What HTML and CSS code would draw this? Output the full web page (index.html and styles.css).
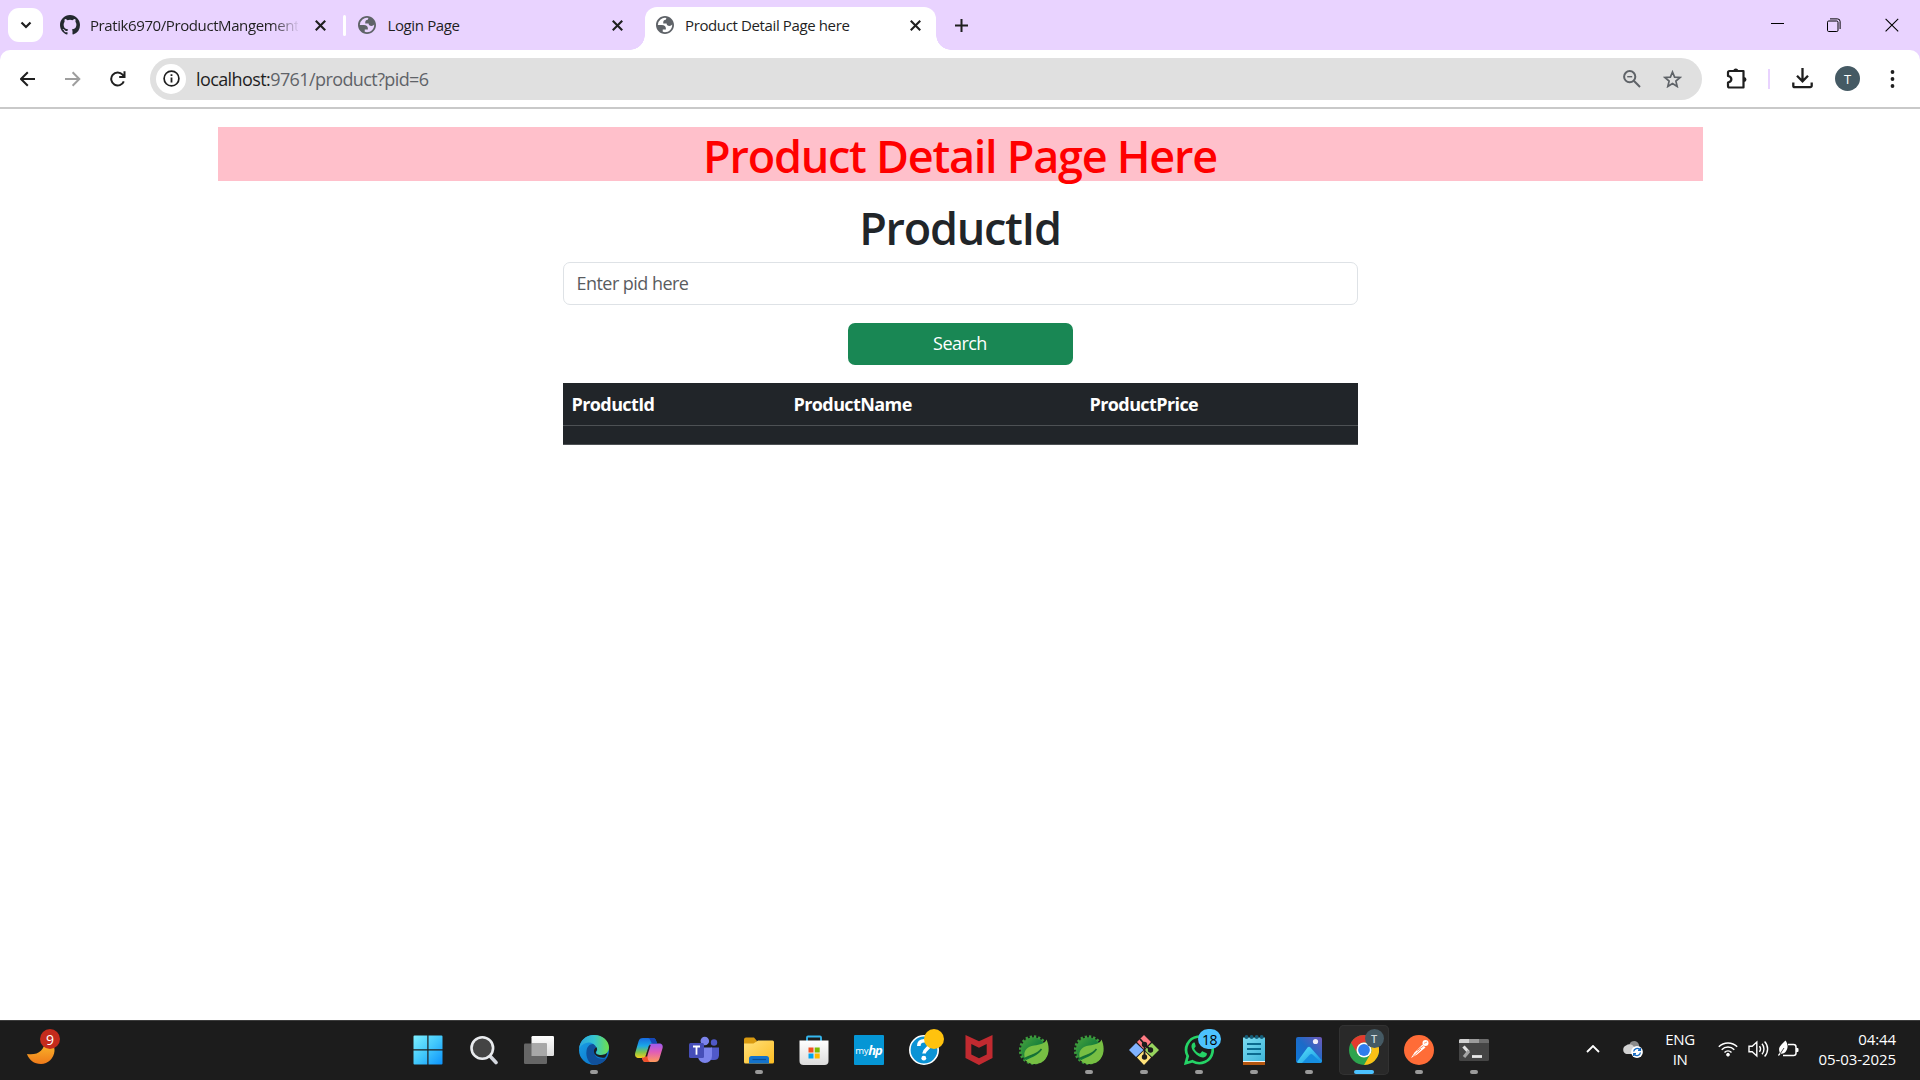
FILE: index.html
```html
<!DOCTYPE html>
<html lang="en">
<head>
<meta charset="utf-8">
<title>Product Detail Page here</title>
<link rel="stylesheet" href="styles.css">
</head>
<body>
<svg class="defs" width="0" height="0" aria-hidden="true">
  <defs>
    <linearGradient id="moon" x1="0" y1="0" x2="0" y2="1"><stop offset="0" stop-color="#fbc02d"/><stop offset="1" stop-color="#ef7a1a"/></linearGradient>
    <linearGradient id="win" gradientUnits="userSpaceOnUse" x1="0" y1="0" x2="30" y2="30"><stop offset="0" stop-color="#7ff0ff"/><stop offset=".5" stop-color="#42c8fb"/><stop offset="1" stop-color="#0a90fb"/></linearGradient>
    <linearGradient id="light" x1="0" y1="0" x2="0" y2="1"><stop offset="0" stop-color="#fff"/><stop offset="1" stop-color="#dcdcdc"/></linearGradient>
    <linearGradient id="edgeTop" x1="0" y1="0" x2="1" y2="0"><stop offset="0" stop-color="#2aa5e0"/><stop offset=".5" stop-color="#35c5d0"/><stop offset="1" stop-color="#6fe04a"/></linearGradient>
    <linearGradient id="edgeLow" x1="0" y1="0" x2="1" y2="1"><stop offset="0" stop-color="#1ca5e8"/><stop offset="1" stop-color="#0667c4"/></linearGradient>
    <linearGradient id="copA" x1="0" y1="0" x2="0" y2="1"><stop offset="0" stop-color="#1769e0"/><stop offset=".4" stop-color="#1aa8e8"/><stop offset=".7" stop-color="#7cc44d"/><stop offset="1" stop-color="#f5cf1c"/></linearGradient>
    <linearGradient id="copB" x1="0" y1="0" x2="0" y2="1"><stop offset="0" stop-color="#9b5cf0"/><stop offset=".45" stop-color="#e05cb8"/><stop offset="1" stop-color="#ff9a5c"/></linearGradient>
    <linearGradient id="folder" x1="0" y1="0" x2="1" y2="1"><stop offset="0" stop-color="#ffe07a"/><stop offset="1" stop-color="#fdbd22"/></linearGradient>
    <linearGradient id="photo" x1="0" y1="1" x2="1" y2="0"><stop offset="0" stop-color="#0d78d8"/><stop offset=".5" stop-color="#1c6bc8"/><stop offset="1" stop-color="#7058b8"/></linearGradient>
    <linearGradient id="hill" x1="0" y1="0" x2="1" y2="1"><stop offset="0" stop-color="#5ce8fa"/><stop offset="1" stop-color="#1590e4"/></linearGradient>
    <linearGradient id="note" x1="0" y1="0" x2="1" y2="1"><stop offset="0" stop-color="#7bdcf2"/><stop offset="1" stop-color="#3fb5d8"/></linearGradient>
    <linearGradient id="gear" x1="0" y1="0" x2="1" y2="1"><stop offset="0" stop-color="#4aa53c"/><stop offset=".6" stop-color="#0f7a3c"/><stop offset="1" stop-color="#3a9a3e"/></linearGradient>
    <symbol id="globe" viewBox="2 2 20 20"><path fill="#5f6368" fill-rule="evenodd" d="M12 2C6.48 2 2 6.48 2 12s4.480 10 10 10 10-4.480 10-10S17.520 2 12 2zM4 12h4.400c3.407.022 4.922 1.730 4.543 5.127H9.488v2.470a8.004 8.004 0 0 0 10.498-8.083C19.327 12.504 18.331 13 17 13c-2.137 0-3.206-.916-3.206-2.750h-3.748c-.274-2.728.683-4.092 2.870-4.092 0-.975.327-1.597.811-1.970A8.004 8.004 0 0 0 4 12z"/></symbol>
    <symbol id="x" viewBox="0 0 10 10"><path d="M.7.7l8.600 8.600M9.300.7L.7 9.300" stroke="#1f1f1f" stroke-width="1.900" fill="none"/></symbol>
    <symbol id="spring" viewBox="0 0 30 30">
      <circle cx="14.500" cy="15" r="12.700" fill="url(#gear)"/>
      <circle cx="14.500" cy="15" r="13.300" fill="none" stroke="#3c9a3c" stroke-width="2.800" stroke-dasharray="2.300 1.880"/>
      <path d="M27.500 4.500C26 9 21 9.500 15 10.500 6 12 4 18 6 23.500 10 20 18 20 22 14.500 19 21.500 11 22.500 6.500 25.500 12 31 22 30 26.500 24 31 18 30 10 27.500 4.500z" fill="#77bf43"/>
      <path d="M4.500 24.500C9 20 18 21 22.500 14" fill="none" stroke="#176f35" stroke-width="1.500"/>
    </symbol>
  </defs>
</svg>

<header class="tabstrip">
  <div class="tab-search"><svg width="12" height="8" viewBox="0 0 12 8"><path d="M1.500 1.500L6 6l4.500-4.500" fill="none" stroke="#1f1f1f" stroke-width="2.200"/></svg></div>
  <div class="tab tab-first">
    <svg width="20" height="20" viewBox="0 0 16 16"><path fill="#24292f" d="M8 0C3.580 0 0 3.580 0 8c0 3.540 2.290 6.530 5.470 7.590.4.070.55-.17.55-.38 0-.19-.01-.82-.01-1.490-2.010.37-2.530-.49-2.690-.94-.09-.23-.48-.94-.82-1.130-.28-.15-.68-.52-.01-.53.63-.01 1.080.58 1.230.82.72 1.210 1.870.87 2.330.66.07-.52.28-.87.51-1.070-1.780-.2-3.640-.89-3.640-3.950 0-.87.31-1.590.82-2.150-.08-.2-.36-1.020.08-2.120 0 0 .67-.21 2.200.82a7.600 7.600 0 0 1 4 0c1.530-1.040 2.200-.82 2.200-.82.44 1.100.16 1.920.08 2.120.51.56.82 1.270.82 2.150 0 3.070-1.870 3.750-3.650 3.950.29.25.54.73.54 1.480 0 1.070-.01 1.930-.01 2.200 0 .21.15.46.55.38A8.010 8.010 0 0 0 16 8c0-4.420-3.580-8-8-8z"/></svg>
    <span class="tab-title tab-title-fade">Pratik6970/ProductMangement</span>
    <svg class="tab-close" width="11" height="11"><use href="#x"/></svg>
  </div>
  <i class="tab-divider"></i>
  <div class="tab tab-second">
    <svg width="18" height="18"><use href="#globe"/></svg>
    <span class="tab-title">Login Page</span>
    <svg class="tab-close" width="11" height="11"><use href="#x"/></svg>
  </div>
  <div class="tab tab-active">
    <svg width="18" height="18"><use href="#globe"/></svg>
    <span class="tab-title">Product Detail Page here</span>
    <svg class="tab-close" width="11" height="11"><use href="#x"/></svg>
  </div>
  <svg class="new-tab" width="13" height="13" viewBox="0 0 13 13"><path d="M6.500 0v13M0 6.500h13" stroke="#1f1f1f" stroke-width="2"/></svg>
  <div class="window-controls">
    <svg width="14" height="14" viewBox="0 0 14 14"><path d="M0 5.500h13" stroke="#000"/></svg>
    <svg width="14" height="14" viewBox="0 0 14 14" fill="none" stroke="#000"><rect x=".5" y="3" width="10.500" height="10.500" rx="1.200"/><path d="M3 .9h7.500a2.600 2.600 0 0 1 2.600 2.600V11"/></svg>
    <svg width="14" height="14" viewBox="0 0 14 14"><path d="M.6.8l12.600 12.600M13.200.8L.6 13.400" stroke="#000" stroke-width="1.100"/></svg>
  </div>
</header>

<nav class="toolbar">
  <div class="nav-buttons">
    <svg width="16" height="16" viewBox="0 0 16 16" fill="none" stroke="#1f1f1f" stroke-width="2"><path d="M15 8H1.500M7.800 1.200L1 8l6.800 6.800"/></svg>
    <svg width="16" height="16" viewBox="0 0 16 16" fill="none" stroke="#9e9e9e" stroke-width="2"><path d="M0 8h13.700M7.600 1.200L14.300 8l-6.700 6.800"/></svg>
    <svg width="16" height="16" viewBox="0 0 16 16" fill="none" stroke="#1f1f1f" stroke-width="2"><path d="M13.800 10.300A6.500 6.500 0 1 1 12.600 3.700L14.500 5.500M14.500.3v5.700H9.200"/></svg>
  </div>
  <div class="omnibox">
    <span class="site-info"><svg width="17" height="17" viewBox="0 0 17 17"><circle cx="8.500" cy="8.500" r="7.400" fill="none" stroke="#1f1f1f" stroke-width="1.700"/><path d="M8.500 7.500v5M8.500 4.300v1.800" stroke="#1f1f1f" stroke-width="1.800"/></svg></span>
    <span class="url"><b>localhost:</b>9761/product?pid=6</span>
    <svg class="zoom" width="18" height="18" viewBox="0 0 18 18" fill="none" stroke="#5f6368" stroke-width="2"><circle cx="6.700" cy="6.700" r="5.600"/><path d="M10.800 10.800L17 17"/><path d="M4.200 6.700h5" stroke-width="1.400"/></svg>
    <svg width="19" height="18" viewBox="0 0 19 18" fill="none" stroke="#5f6368" stroke-width="1.700"><path d="M9.500 2l2.100 5.100 5.500.4-4.200 3.600 1.300 5.400-4.700-2.900-4.700 2.900 1.300-5.400L1.900 7.500l5.500-.4z"/></svg>
  </div>
  <svg class="puzzle" width="22" height="22" viewBox="0 0 22 22"><path d="M3.500 3h14v16.500h-14a1.500 1.500 0 0 1-1.500-1.500v-3.500c4.500-1 4.500-5.500 0-6.500V4.500A1.500 1.500 0 0 1 3.500 3z" fill="none" stroke="#1f1f1f" stroke-width="2.200" stroke-linejoin="round"/><path d="M7.300 3a2.500 2.500 0 0 1 5 0zM18 9a2.500 2.500 0 0 1 0 5z" fill="#1f1f1f"/></svg>
  <i class="toolbar-divider"></i>
  <svg class="download" width="21" height="21" viewBox="0 0 21 21" fill="none" stroke="#1f1f1f" stroke-width="2.300"><path d="M10.500 0v13M5 7.800l5.500 5.500L16 7.800M1.300 14.500v3.200a1.500 1.500 0 0 0 1.500 1.500h15.400a1.500 1.500 0 0 0 1.500-1.500v-3.200"/></svg>
  <span class="avatar">T</span>
  <svg class="menu" width="5" height="20" viewBox="0 0 5 20" fill="#1f1f1f"><circle cx="2.500" cy="3" r="1.900"/><circle cx="2.500" cy="10" r="1.900"/><circle cx="2.500" cy="17" r="1.900"/></svg>
</nav>

<main class="page">
  <h1 class="banner">Product Detail Page Here</h1>
  <form class="search-form">
    <h1 class="field-label">ProductId</h1>
    <input class="field" type="text" placeholder="Enter pid here">
    <button class="search-button" type="button">Search</button>
  </form>
  <table class="results">
    <thead><tr><th class="col-id">ProductId</th><th class="col-name">ProductName</th><th>ProductPrice</th></tr></thead>
    <tbody><tr><td></td><td></td><td></td></tr></tbody>
  </table>
</main>

<footer class="taskbar">
  <div class="weather">
    <svg width="28" height="28" viewBox="0 0 28 28"><path d="M0 17c11 1.500 17-3 18.500-14C25 5 28 9 27.500 14 27 21 21 27 14 27 7 27 2 23 0 17z" fill="url(#moon)"/></svg>
    <span class="badge badge-red">9</span>
  </div>

  <div class="apps">
    <div class="app app-start"><svg width="30" height="30" viewBox="0 0 30 30" fill="url(#win)"><path d="M.5 1.500a1 1 0 0 1 1-1H14.300V14.300H.5zM15.500.5h13a1 1 0 0 1 1 1v12.800h-14zM.5 15.500h13.800v14H1.500a1 1 0 0 1-1-1zM15.500 15.500h14v13a1 1 0 0 1-1 1h-13z"/></svg></div>
    <div class="app"><svg width="30" height="30" viewBox="0 0 30 30"><path d="M20.500 20.500l6.500 7" stroke="#d3d7de" stroke-width="3.600" stroke-linecap="round"/><circle cx="13.300" cy="13" r="10.800" fill="#444" stroke="#e9ebee" stroke-width="2.600"/></svg></div>
    <div class="app"><svg width="30" height="30" viewBox="0 0 30 30"><rect x="7.500" y="1" width="22.500" height="20" rx="1.200" fill="url(#light)"/><rect x="0" y="8.500" width="23" height="20.500" rx="1.200" fill="#666"/><path d="M7.500 8.500H23V21H7.500z" fill="#a8a8a8"/></svg></div>
    <div class="app"><svg width="30" height="30" viewBox="0 0 30 30"><circle cx="15" cy="15" r="15" fill="url(#edgeLow)"/><path d="M7.500 16C8 11 12 8 16 9.500l3 4-3 3.500c-1 4 3 8.500 11.500 6.500C25 27.500 20 30 15 30 10 29 6.500 22 7.500 16z" fill="#10509c"/><path d="M0 14C1 5 7 0 15 0c9 0 15 6 15 12.500 0 5-4 7.500-8 7.500-4.500 0-5.500-1.600-4.500-3 1-1.500 1-3 0-4.500C15.500 9 12.500 7.300 9.500 7.500 5 8 1.500 10.500 0 14z" fill="url(#edgeTop)"/><path d="M17.300 12.300c1.700 2.300 0 3.700-.4 4.700-.5 1.800 1.600 3 5.100 3 2.600 0 4.700-.8 6.300-2.200-.5 2.200-1.200 3.300-2.300 4.700-5 1-10.500-1.500-11-5.500-.2-2 .5-3.700 2.300-4.700z" fill="#1c1c1c"/></svg><i class="dot"></i></div>
    <div class="app"><svg width="30" height="30" viewBox="0 0 30 30"><path d="M9 3h9.500c2 0 3 .8 3.500 2.500l1 3h-4.500c-2 0-3 .8-3.500 2.500L12 20c-.6 2.500-1.500 3-3.500 3H5c-3 0-4.500-2-3.800-5L4.500 6.500C5.200 4 6.500 3 9 3z" fill="url(#copA)"/><path d="M21 27h-9c-2 0-3-.8-3.500-2.500L8 22.500c2.500.5 3.500-.5 4-2.500l3-9c.5-1.700 1.500-2.500 3.500-2.500H25c3 0 4.300 2 3.600 4.500L25.500 23.500C24.800 26 23.500 27 21 27z" fill="url(#copB)"/><path d="M14 3h4.500c2 0 3 .8 3.500 2.500l1 3h-4c-2.500 0-2.500-5.500-5-5.500z" fill="#1647b8"/><path d="M8 22.500c2.500.5 3.500-.5 4-2.500l1-3c1 3-.5 8 3 10h-4c-2 0-3-.8-3.500-2.500z" fill="#f0502c"/><path d="M16.800 9.800L13 21.500h-1.500L15 10.500z" fill="#1c1c1c"/></svg></div>
    <div class="app"><svg width="30" height="30" viewBox="0 0 30 30"><circle cx="25" cy="7.500" r="3.200" fill="#5059c9"/><path d="M22 12.500h8v8a5 5 0 0 1-5 4.500h-3z" fill="#5059c9"/><circle cx="15.800" cy="6" r="4.300" fill="#7b83eb"/><path d="M9 12.500h14v8.500a7 7 0 0 1-14 0z" fill="#7b83eb"/><rect y="8" width="15" height="15" rx="1.500" fill="#464eb8"/><path d="M4 11.500h7M7.500 11.500v8.300" stroke="#fff" stroke-width="1.800"/></svg></div>
    <div class="app"><svg width="30" height="30" viewBox="0 0 30 30"><path d="M0 4.500A2 2 0 0 1 2 2.500h8l3 3.500-3 5H0z" fill="#d99a10"/><path d="M0 8.500h9.500L14 5.500h14.500A1.500 1.500 0 0 1 30 7v20a1.500 1.500 0 0 1-1.500 1.500h-27A1.500 1.500 0 0 1 0 27z" fill="url(#folder)"/><path d="M5 28.500V23.500a2.500 2.500 0 0 1 2.500-2.500h15a2.500 2.500 0 0 1 2.500 2.500v5z" fill="#1473cc"/><path d="M8.500 24.500h13.500" stroke="#0b4f94" stroke-width="1.200"/></svg><i class="dot"></i></div>
    <div class="app"><svg width="30" height="30" viewBox="0 0 30 30"><path d="M8 7V2.500a1 1 0 0 1 1-1h12a1 1 0 0 1 1 1V7" fill="none" stroke="#35b8f0" stroke-width="1.800"/><path d="M.5 5.500h29V26a4 4 0 0 1-4 4h-21a4 4 0 0 1-4-4z" fill="url(#light)"/><path d="M9.500 12.500h5v5h-5z" fill="#f25022"/><path d="M15.700 12.500h5v5h-5z" fill="#7fba00"/><path d="M9.500 18.500h5v5h-5z" fill="#00a4ef"/><path d="M15.700 18.500h5v5h-5z" fill="#ffb900"/></svg></div>
    <div class="app"><span class="myhp">my<b>hp</b></span></div>
    <div class="app"><svg width="30" height="30" viewBox="0 0 30 30"><circle cx="15" cy="15" r="14.200" fill="#0b93d5" stroke="#fff" stroke-width="1.600"/><path d="M9.800 11c0-4 2.500-5.200 5.500-5.200 3.500 0 5.500 1.600 5.200 4.400-.4 3.600-5.200 3.800-5.500 8.300" fill="none" stroke="#fff" stroke-width="3.600"/><circle cx="14.800" cy="23.200" r="2.400" fill="#fff"/></svg><i class="alert"></i></div>
    <div class="app"><svg width="30" height="30" viewBox="0 0 30 30"><path d="M1.500 0L15 6.300 28.500 0v23L15 30 1.500 23zM7.300 9v10.500L15 23.300l7.700-3.800V9L15 12.700z" fill="#c12a30" fill-rule="evenodd"/></svg></div>
    <div class="app"><svg width="30" height="30"><use href="#spring"/></svg></div>
    <div class="app"><svg width="30" height="30"><use href="#spring"/></svg><i class="dot"></i></div>
    <div class="app"><svg width="30" height="30" viewBox="0 0 30 30"><path d="M15 0l7 7-7 7.500L8 7z" fill="#ff7b83"/><path d="M23 8l7 7-7 7-7.500-7z" fill="#97d45e"/><path d="M7 8l7.500 7L7 22 0 15z" fill="#80b3ff"/><path d="M15 15.500l7 7-7 7.500-7-7.500z" fill="#ffe27a"/><path d="M11 4l4.500 5v14M15.500 9l6 6" stroke="#1c1c1c" stroke-width="1.800" fill="none"/><circle cx="15.500" cy="9.500" r="2.700" fill="#1c1c1c"/><circle cx="21.500" cy="15" r="2.700" fill="#1c1c1c"/><circle cx="15.500" cy="22" r="2.700" fill="#1c1c1c"/></svg><i class="dot"></i></div>
    <div class="app"><svg width="30" height="30" viewBox="0 0 30 30"><path d="M1.800 28.200l1.900-7A13.300 13.300 0 1 1 8.600 26.300z" fill="none" stroke="#25d366" stroke-width="2.700"/><path d="M10.800 7.800c-.8-.5-1.700-.2-2.400.8-1.900 2.600-.6 6 2 9 3 3.500 6.500 5.500 9.800 4.600 1.600-.5 2.700-1.600 2.700-3.200 0-.6-.2-.8-.7-1l-3.400-1.600c-.5-.2-.8-.1-1.100.3l-1.300 1.600c-.3.300-.6.400-1 .2-2.200-1-3.800-2.500-5-4.500-.2-.4-.2-.7.1-1l1-1.300c.2-.3.300-.6.100-1z" fill="#25d366"/></svg><span class="badge badge-blue">18</span><i class="dot"></i></div>
    <div class="app"><svg width="30" height="30" viewBox="0 0 30 30"><path d="M4 26.500h22V30H4z" fill="#b4560f"/><path d="M4 24.500h22V27H4z" fill="#f4f4f4"/><path d="M4 2.500h22v23.500H4z" fill="url(#note)"/><path d="M8 9h14M8 14h14M8 19h14" stroke="#0b6b8f" stroke-width="1.900"/><g fill="#155f7a"><circle cx="7.500" cy="2" r="1.900"/><circle cx="12.600" cy="2" r="1.900"/><circle cx="17.700" cy="2" r="1.900"/><circle cx="22.700" cy="2" r="1.900"/></g></svg><i class="dot"></i></div>
    <div class="app"><svg width="30" height="30" viewBox="0 0 30 30"><rect x="2" y="2" width="26" height="26" rx="2" fill="url(#photo)"/><path d="M3 27L13.500 12.500a2 2 0 0 1 3 0L28 25.500V26a2 2 0 0 1-2 2H4z" fill="url(#hill)"/><path d="M8 28l8-8.500a2 2 0 0 1 2.500 0L27 27.500l-1 .5z" fill="#168ee0"/><circle cx="21.500" cy="6.500" r="2.600" fill="#f0eef8"/></svg><i class="dot"></i></div>
    <div class="app app-current"><svg width="30" height="30" viewBox="0 0 30 30"><circle cx="15" cy="15" r="15" fill="#2da44e"/><path d="M15 0a15 15 0 0 1 13 7.500H15a7.500 7.500 0 0 0-6.500 11.200L2 7.500A15 15 0 0 1 15 0z" fill="#e33b2e"/><path d="M28 7.500A15 15 0 0 1 15 30l6.500-11.200A7.500 7.500 0 0 0 15 7.500z" fill="#fbc116"/><circle cx="15" cy="15" r="7.500" fill="#fff"/><circle cx="15" cy="15" r="5.900" fill="#2f7ded"/></svg><span class="badge badge-profile">T</span><i class="dot"></i></div>
    <div class="app"><svg width="30" height="30" viewBox="0 0 30 30"><circle cx="15" cy="15" r="15" fill="#ff6c37"/><path d="M18.500 9.500l3 3-8.500 7-6 3.500 3.500-5.500z" fill="#fff"/><path d="M17 14l-8 7.500M19.500 11l-6.500 4.500" stroke="#ff6c37" stroke-width=".8"/><circle cx="21.500" cy="8" r="3" fill="#fff"/><path d="M20 8.300l3-1.300" stroke="#ff6c37" stroke-width=".7"/></svg><i class="dot"></i></div>
    <div class="app"><svg width="30" height="30" viewBox="0 0 30 30"><rect y="4" width="30" height="22" rx="1.500" fill="#454545"/><path d="M0 8V5.500A1.500 1.500 0 0 1 1.500 4H10v4z" fill="#d0d0d0"/><path d="M10 4h10v4H10z" fill="#9b9b9b"/><path d="M20 4h8.500A1.500 1.500 0 0 1 30 5.500V8H20z" fill="#6c6c6c"/><path d="M4.500 11.500l5 5.500" stroke="#e0e0e0" stroke-width="3.200"/><path d="M10 16l-5 6" stroke="#a5a5a5" stroke-width="3.200"/><path d="M13 21.500h10" stroke="#e8e8e8" stroke-width="2.800"/></svg><i class="dot"></i></div>
  </div>

  <div class="tray">
    <svg class="tray-chevron" width="14" height="8" viewBox="0 0 14 8"><path d="M1 7l6-6 6 6" fill="none" stroke="#fff" stroke-width="1.800"/></svg>
    <svg class="tray-cloud" width="22" height="18" viewBox="0 0 22 18"><path d="M8 3C10 0 16 0 17 5l1 6H6z" fill="#8b8b8b"/><path d="M4.500 14A4.500 4.500 0 0 1 4 5.500c3-2.500 7-1 8 1.500l4 2-1 5z" fill="#d2d2d2"/><circle cx="15" cy="12" r="5.900" fill="#fff"/><path d="M11.700 11.500a3.500 3.500 0 0 1 6-2M18.400 8v2.400H16M18.400 12.500a3.500 3.500 0 0 1-6 2M11.700 16v-2.400H14" fill="none" stroke="#1469c0" stroke-width="1.300"/></svg>
    <span class="tray-lang">ENG<br>IN</span>
    <svg class="tray-wifi" width="20" height="16" viewBox="0 0 20 16" fill="none" stroke="#fff" stroke-width="1.500"><path d="M.8 5.800a13 13 0 0 1 18.400 0M3.700 8.700a8.900 8.900 0 0 1 12.600 0M6.500 11.500a5 5 0 0 1 7 0"/><circle cx="10" cy="13.700" r="1.400" fill="#fff" stroke-width="1"/></svg>
    <svg class="tray-sound" width="21" height="18" viewBox="0 0 21 18" fill="none" stroke="#fff" stroke-width="1.400"><path d="M1 6.300h3.200L8.800 2v14l-4.600-4.300H1zM11.500 6.200c1.200 1.600 1.200 4 0 5.600M14 3.800c2.600 3 2.600 7.400 0 10.400M16.600 1.600c4 4.200 4 10.600 0 14.800"/></svg>
    <svg class="tray-battery" width="21" height="18" viewBox="0 0 21 18"><path d="M10 4.500h5.500a2.500 2.500 0 0 1 2.500 2.500v6a2.500 2.500 0 0 1-2.500 2.500H5" fill="none" stroke="#fff" stroke-width="1.500"/><path d="M18 8h1.500a1 1 0 0 1 1 1v2a1 1 0 0 1-1 1H18zM7.500.5c2.500 3 3 8 0 11.500-1.500 1.500-3.500 2-4.500 1.500L.8 16 0 15l1.800-2.500C-.500 7.500 3 5 7.500.5z" fill="#fff"/><path d="M2 14l4-6" stroke="#1c1c1c" stroke-width=".8"/></svg>
    <span class="tray-clock">04:44<br>05-03-2025</span>
  </div>
</footer>
</body>
</html>
```
FILE: styles.css
```css
* { box-sizing: border-box; }

body {
  margin: 0;
  height: 1080px;
  display: flex;
  flex-direction: column;
  overflow: hidden;
  background: #fff;
  color: #212529;
  font-family: "Open Sans", "Noto Sans", sans-serif;
}

svg { display: block; flex: none; }
.defs { position: absolute; }

/* Tab strip */
.tabstrip {
  display: flex;
  align-items: center;
  height: 50px;
  flex: none;
  padding-left: 8px;
  background: #e9d3ff;
}
.tab-search {
  display: flex;
  align-items: center;
  justify-content: center;
  width: 35px;
  height: 34px;
  border-radius: 11px;
  background: #fff;
}
.tab { display: flex; align-items: center; }
.tab-title {
  flex: 1;
  margin-left: 11px;
  font-size: 15px;
  line-height: 20px;
  letter-spacing: -0.025em;
  white-space: nowrap;
  overflow: hidden;
  color: #1f1f1f;
}
.tab-title-fade {
  flex: 0 0 208px;
  margin-left: 10px;
  letter-spacing: -0.027em;
  -webkit-mask-image: linear-gradient(90deg, #000 182px, transparent 210px);
  mask-image: linear-gradient(90deg, #000 182px, transparent 210px);
}
.tab-first { width: 266px; margin-left: 17px; }
.tab-first .tab-close { margin-left: 16.500px; }
.tab-divider { width: 3px; height: 21px; margin-left: 17px; border-radius: 2px; background: #fff; }
.tab-second { width: 265px; margin-left: 12px; }
.tab-second .tab-title { margin-left: 11.500px; }
.tab-active {
  position: relative;
  align-self: flex-end;
  width: 291px;
  height: 43px;
  margin-left: 22px;
  padding: 0 15.500px 7px 11px;
  border-radius: 12px 12px 0 0;
  background: #fff;
}
.tab-active::before, .tab-active::after {
  content: "";
  position: absolute;
  bottom: 0;
  width: 15px;
  height: 15px;
}
.tab-active::before { right: 100%; background: radial-gradient(circle at 0 0, transparent 14.500px, #fff 15px); }
.tab-active::after { left: 100%; background: radial-gradient(circle at 100% 0, transparent 14.500px, #fff 15px); }
.new-tab { margin-left: 18.500px; }
.window-controls { display: flex; gap: 43px; margin: -1px 21px 0 auto; }
.window-controls svg:first-child { margin-right: -7px; }
.window-controls { gap: 44px; }
.window-controls svg:first-child { margin-right: -2px; }

/* Toolbar */
.toolbar {
  position: relative;
  display: flex;
  align-items: center;
  height: 59px;
  flex: none;
  padding-left: 20px;
  border-bottom: 2px solid #c9c9c9;
  background: linear-gradient(#e9d3ff, #e9d3ff) top / 100% 12px no-repeat;
  z-index: 0;
}
.toolbar::before {
  content: "";
  position: absolute;
  inset: 0;
  z-index: -1;
  border-radius: 10px 10px 0 0;
  background: #fff;
}
.nav-buttons { display: flex; gap: 29px; }
.omnibox {
  display: flex;
  align-items: center;
  width: 1552px;
  height: 42px;
  margin-left: 24px;
  padding: 0 20px 0 6px;
  border-radius: 21px;
  background: #e0e0e0;
}
.site-info {
  display: flex;
  align-items: center;
  justify-content: center;
  width: 30px;
  height: 30px;
  border-radius: 50%;
  background: #fff;
}
.url { margin-left: 10px; font-size: 18px; line-height: 24px; letter-spacing: -0.033em; color: #5f6368; }
.url b { font-weight: 400; color: #1f1f1f; }
.zoom { margin-left: auto; margin-right: 22px; }
.puzzle { margin-left: 24px; }
.toolbar-divider { width: 2px; height: 20px; margin-left: 20px; background: #e9d3ff; }
.download { margin-left: 22px; }
.avatar {
  display: flex;
  align-items: center;
  justify-content: center;
  width: 25px;
  height: 25px;
  margin-left: 22px;
  border-radius: 50%;
  background: #455a64;
  color: #fff;
  font-size: 13px;
}
.menu { margin-left: 30px; }

/* Page */
.page { flex: 1; width: 1485px; margin: 0 auto; padding-top: 18px; }
.banner, .field-label {
  height: 54px;
  margin: 0;
  padding-top: 2px;
  font-size: 45px;
  font-weight: 600;
  line-height: 54px;
  letter-spacing: -0.028em;
  text-align: center;
}
.banner { background: pink; color: red; }
.search-form { width: 795px; margin: 18px auto 0; display: flex; flex-direction: column; align-items: center; }
.field {
  width: 100%;
  height: 43px;
  margin-top: 9px;
  padding: 0 13px 1px;
  border: 1px solid #dee2e6;
  border-radius: 7px;
  background: #fff;
  font: 18px/27px "Open Sans", "Noto Sans", sans-serif;
  letter-spacing: -0.030em;
}
.field::placeholder { color: #595c5f; opacity: 1; }
.search-button {
  width: 225px;
  height: 42px;
  margin-top: 18px;
  padding: 0 0 2px;
  border: 0;
  border-radius: 7px;
  background: #198754;
  color: #fff;
  font: 18px/27px "Open Sans", "Noto Sans", sans-serif;
  letter-spacing: -0.030em;
}
.results {
  width: 795px;
  margin: 18px auto 0;
  border-collapse: separate;
  border-spacing: 0;
  table-layout: fixed;
  background: #212529;
  color: #fff;
}
.results th {
  height: 43px;
  padding: 0 9px;
  border-bottom: 1px solid #4d5154;
  font-size: 18px;
  font-weight: 700;
  letter-spacing: -0.033em;
  text-align: left;
}
.results td { height: 19px; padding: 0; border-bottom: 1px solid #4d5154; }
.col-id { width: 222px; }
.col-name { width: 296px; }

/* Taskbar */
.taskbar {
  display: flex;
  height: 60px;
  flex: none;
  border-top: 1px solid #3c3c3c;
  background: #1c1c1c;
  color: #fff;
}
.weather { position: relative; width: 401px; flex: none; padding: 16px 0 0 27px; }
.badge {
  position: absolute;
  display: flex;
  align-items: center;
  justify-content: center;
  height: 20px;
  border-radius: 10px;
}
.badge-red { left: 40px; top: 8px; width: 20px; background: #c42b1c; font-size: 14px; }
.badge-blue { left: 27px; top: 4px; width: 23px; background: #4cc2ff; color: #000; font-size: 14px; letter-spacing: -0.04em; }
.badge-profile { left: 26px; top: 4px; width: 19px; height: 19px; background: #455a64; color: #cfd8dc; font-size: 11px; font-weight: 600; }
.apps { display: flex; }
.app {
  position: relative;
  display: flex;
  justify-content: center;
  width: 55px;
  height: 50px;
  margin-top: 4px;
  padding-top: 10px;
}
.app-start { padding-right: 2px; }
.app-current { width: 50px; margin-left: 2.500px; margin-right: 2.500px; border-radius: 5px; background: #292929; box-shadow: inset 0 0 0 1px #323232; }
.app-current .dot { width: 20px; background: #4cc2ff; }
.dot {
  position: absolute;
  left: 0;
  right: 0;
  bottom: 1px;
  width: 8px;
  height: 4px;
  margin: 0 auto;
  border-radius: 2px;
  background: #9a9a9a;
}
.alert { position: absolute; left: 28px; top: 4px; width: 20px; height: 20px; border-radius: 50%; background: #ffc20e; }
.myhp {
  display: flex;
  align-items: center;
  justify-content: center;
  width: 30px;
  height: 30px;
  border-radius: 1px;
  background: #0596d5;
  font-size: 9.500px;
  letter-spacing: -0.03em;
}
.myhp b { font: italic 700 13px "Open Sans", sans-serif; letter-spacing: -0.08em; }
.tray {
  display: flex;
  align-items: center;
  margin-left: auto;
  padding: 0 24px 3px 0;
  font-size: 15px;
  line-height: 20px;
}
.tray-chevron { margin-right: 22px; }
.tray-cloud { margin-right: 21px; }
.tray-lang { margin-right: 23px; text-align: center; letter-spacing: -0.02em; }
.tray-wifi { margin-right: 10px; }
.tray-sound { margin-right: 9px; }
.tray-battery { margin-right: 19.500px; }
.tray-clock { text-align: right; letter-spacing: -0.005em; }
```
